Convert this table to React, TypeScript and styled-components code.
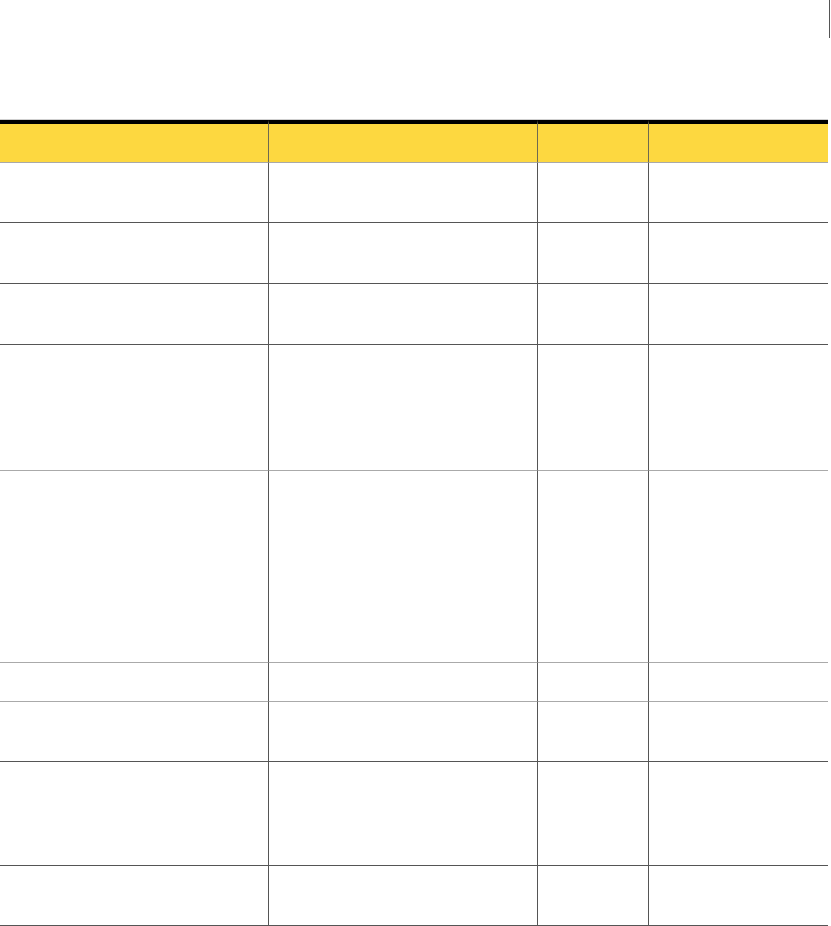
import styled, { createGlobalStyle } from 'styled-components';

const GlobalStyle = createGlobalStyle`
  body {
    margin: 0;
    background: #ffffff;
    font-family: "Liberation Sans", Arial, sans-serif;
  }
`

// heights of the body rows, and which ones end on a light rule
const rows: { height: number; light?: boolean }[] = [
  { height: 60 },
  { height: 61 },
  { height: 61 },
  { height: 126, light: true },
  { height: 192, light: true },
  { height: 39, light: true },
  { height: 60 },
  { height: 104 },
  { height: 60 },
]

const columns = ['', '', '', '']

export default function App() {
  return (
    <Page>
      <GlobalStyle />
      <TopBar>
        <PageMark />
      </TopBar>
      <Table>
        <HeaderRow>
          {columns.map((label, i) => (
            <HeaderCell key={i} first={i === 0}>{label}</HeaderCell>
          ))}
        </HeaderRow>
        {rows.map((row, r) => (
          <Row key={r}>
            {columns.map((_, i) => (
              <Cell key={i} first={i === 0} light={row.light} style={{ height: row.height }} />
            ))}
          </Row>
        ))}
      </Table>
    </Page>
  )
}

const Page = styled.div`
  width: 831px;
  display: flex;
  flex-direction: column;
`
const TopBar = styled.div`
  height: 119px;
  display: flex;
  justify-content: flex-end;
  padding-right: 1px;
`
const PageMark = styled.div`
  width: 1px;
  height: 38px;
  background: #555555;
`
const Table = styled.div`
  width: 828px;
  display: grid;
  grid-template-columns: 268px 269px 111px 180px;
  border-top: 1px solid #cfcfcf;
`
const Row = styled.div`
  display: contents;
`
const HeaderRow = styled.div`
  display: contents;
`
const HeaderCell = styled.div<{ first?: boolean }>`
  box-sizing: border-box;
  height: 43px;
  background: #fdd840;
  border-top: 4px solid #000000;
  border-bottom: 1px solid #a9a9a9;
  border-left: ${p => (p.first ? 'none' : '1px solid #6f6a50')};
  font-size: 13px;
  font-weight: bold;
  padding: 6px 8px;
`
const Cell = styled.div<{ first?: boolean; light?: boolean }>`
  box-sizing: border-box;
  border-bottom: 1px solid ${p => (p.light ? '#aaaaaa' : '#555555')};
  border-left: ${p => (p.first ? 'none' : '1px solid #555555')};
  font-size: 13px;
  padding: 6px 8px;
`
